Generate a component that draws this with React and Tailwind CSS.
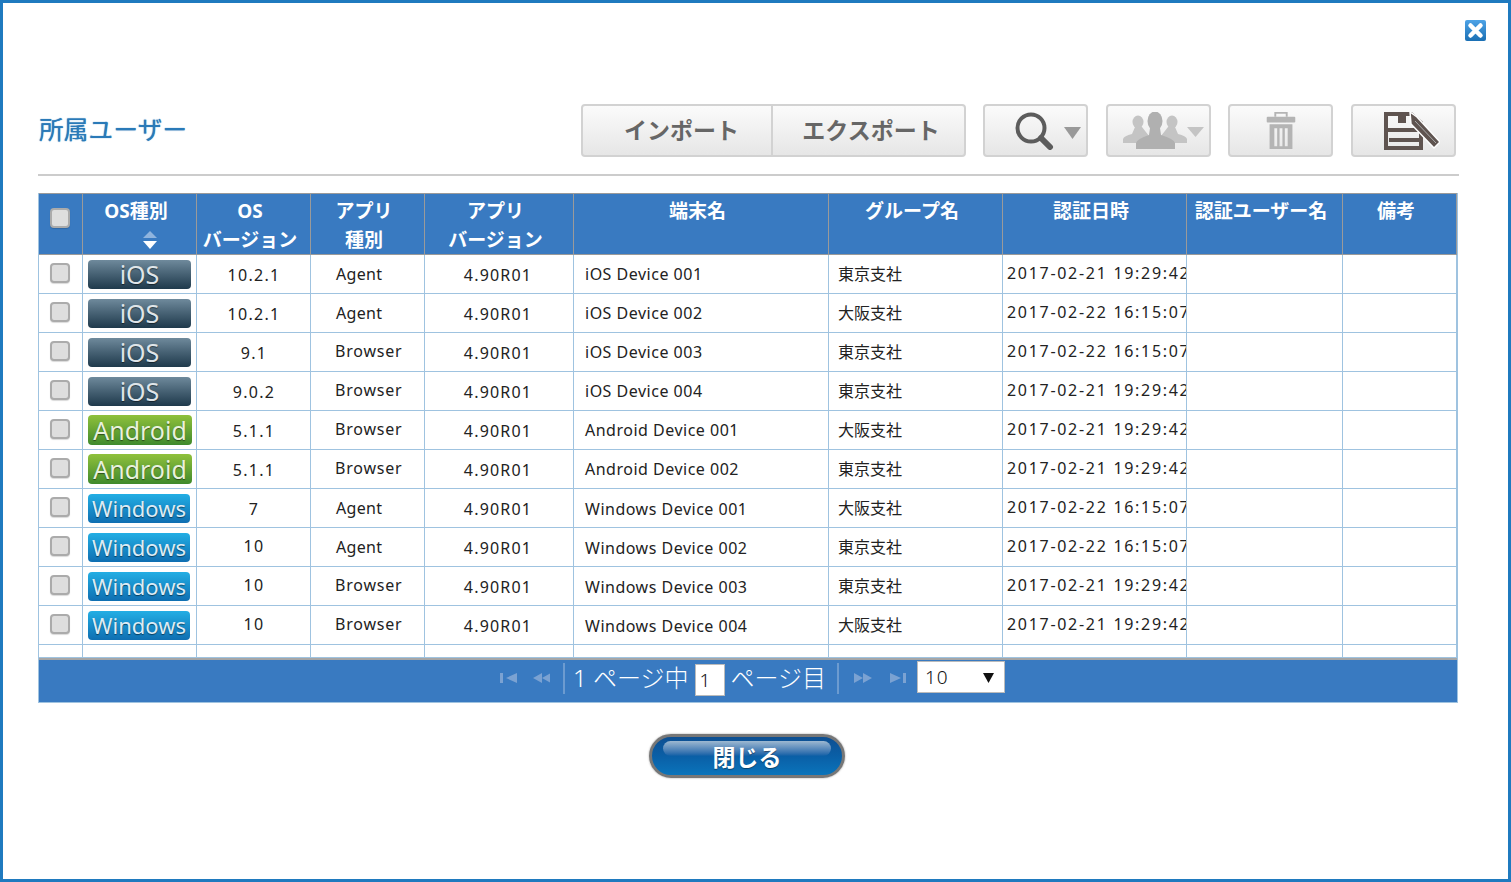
import React from "react";

const font = "[font-family:'Noto_Sans','Noto_Sans_CJK_JP',sans-serif]";
const cellBorder = "border border-[#9fc3e0]";

const rows = [
  ["ios", "10.2.1", "Agent", "iOS Device 001", "東京支社", "2017-02-21 19:29:42"],
  ["ios", "10.2.1", "Agent", "iOS Device 002", "大阪支社", "2017-02-22 16:15:07"],
  ["ios", "9.1", "Browser", "iOS Device 003", "東京支社", "2017-02-22 16:15:07"],
  ["ios", "9.0.2", "Browser", "iOS Device 004", "東京支社", "2017-02-21 19:29:42"],
  ["android", "5.1.1", "Browser", "Android Device 001", "大阪支社", "2017-02-21 19:29:42"],
  ["android", "5.1.1", "Browser", "Android Device 002", "東京支社", "2017-02-21 19:29:42"],
  ["windows", "7", "Agent", "Windows Device 001", "大阪支社", "2017-02-22 16:15:07"],
  ["windows", "10", "Agent", "Windows Device 002", "東京支社", "2017-02-22 16:15:07"],
  ["windows", "10", "Browser", "Windows Device 003", "東京支社", "2017-02-21 19:29:42"],
  ["windows", "10", "Browser", "Windows Device 004", "大阪支社", "2017-02-21 19:29:42"],
];

function Checkbox({ className = "" }) {
  return (
    <div className={`w-[20px] h-[20px] rounded-[4px] border-2 border-[#ababab] bg-[#dedede] shadow-[0_1px_1px_rgba(0,0,0,0.15)] ${className}`} />
  );
}

function OsBadge({ os }) {
  if (os === "ios")
    return (
      <div className="w-[103px] h-[29px] ml-[5px] rounded-[4px] bg-linear-to-b from-[#6f8a9c] to-[#1f3a4c] flex items-center justify-center text-[25px] leading-none text-[#dfe5e9] [font-family:'Noto_Sans',sans-serif] [text-shadow:0_1px_1px_rgba(0,0,0,0.5)]">
        iOS
      </div>
    );
  if (os === "android")
    return (
      <div className="w-[104px] h-[30px] ml-[5px] rounded-[4px] bg-linear-to-b from-[#8fc13c] to-[#3f8a2c] flex items-center justify-center text-[25px] leading-none text-[#e8f2dc] [font-family:'Noto_Sans',sans-serif] [text-shadow:0_1px_1px_rgba(0,0,0,0.5)]">
        Android
      </div>
    );
  return (
    <div className="w-[102px] h-[29px] ml-[5px] rounded-[4px] bg-linear-to-b from-[#23aee4] to-[#0f6fb2] flex items-center justify-center text-[22px] leading-none text-[#dcecf6] [font-family:'Noto_Sans',sans-serif] [text-shadow:0_1px_1px_rgba(0,0,0,0.5)]">
      Windows
    </div>
  );
}

function ToolButton({ children, className = "" }) {
  return (
    <div className={`w-[105px] h-[53px] rounded-[4px] border-2 border-[#d2d2d2] bg-linear-to-b from-[#fbfbfb] to-[#e6e6e6] flex items-center justify-center ${className}`}>
      {children}
    </div>
  );
}

function Th({ children, className = "" }) {
  return (
    <th className={`border border-[#9a9a9a] align-top pt-[3px] pr-[7px] pb-0 pl-0 text-center font-bold text-[19px] leading-[29px] text-white whitespace-nowrap overflow-hidden ${className}`}>
      <div className="h-[57px] flow-root">{children}</div>
    </th>
  );
}

function PagerTri({ dir, bar }) {
  return (
    <svg width="18" height="12" viewBox="0 0 18 12" className="fill-[#7ba2d2]">
      {dir === "left" ? (
        bar ? (
          <>
            <rect x="0" y="1" width="3" height="10" />
            <polygon points="17,1 17,11 6,6" />
          </>
        ) : (
          <>
            <polygon points="10,1 10,11 1,6" />
            <polygon points="19,1 19,11 10,6" />
          </>
        )
      ) : bar ? (
        <>
          <polygon points="1,1 1,11 12,6" />
          <rect x="14" y="1" width="3" height="10" />
        </>
      ) : (
        <>
          <polygon points="0,1 0,11 9,6" />
          <polygon points="9,1 9,11 18,6" />
        </>
      )}
    </svg>
  );
}

export default function App() {
  return (
    <div className={`w-[1511px] h-[882px] box-border border-[3px] border-[#1f7abf] bg-white text-[#222] overflow-hidden ${font}`}>
      <div className="flex justify-end pt-[17px] pr-[22px]">
        <svg width="21" height="21" viewBox="0 0 21 21">
          <defs>
            <linearGradient id="cb" x1="0" y1="0" x2="0" y2="1">
              <stop offset="0" stopColor="#4ea3e6" />
              <stop offset="1" stopColor="#1a6fb4" />
            </linearGradient>
          </defs>
          <rect width="21" height="21" rx="2" fill="url(#cb)" />
          <path d="M5.5 5.5 L15.5 15.5 M15.5 5.5 L5.5 15.5" stroke="#fff" strokeWidth="4.5" strokeLinecap="round" />
        </svg>
      </div>

      <div className="flex items-center pl-[36px] pr-[52px] mt-[63px] h-[53px]">
        <h1 className="text-[24.5px] leading-none font-normal tracking-[0.3px] text-[#2a7ab8] [text-shadow:0_0_1px_#2a7ab8] flex-1">所属ユーザー</h1>
        <div className="flex h-[53px] w-[385px] rounded-[4px] border-2 border-[#d2d2d2] bg-linear-to-b from-[#fbfbfb] to-[#e6e6e6] text-[23px] font-bold text-[#666]">
          <div className="w-[190px] pl-[9px] flex items-center justify-center border-r-2 border-[#d2d2d2]">インポート</div>
          <div className="flex-1 pl-[5px] flex items-center justify-center">エクスポート</div>
        </div>
        <div className="flex gap-[18px] ml-[17px]">
          <ToolButton>
            <svg width="66" height="38" viewBox="0 0 66 38" className="ml-[25px]">
              <circle cx="16" cy="16" r="13.5" fill="none" stroke="#5c5c5c" strokeWidth="4" />
              <path d="M26 26 L35 35" stroke="#5c5c5c" strokeWidth="6" strokeLinecap="round" />
              <polygon points="49,15 66,15 57.5,27" fill="#999" />
            </svg>
          </ToolButton>
          <ToolButton>
            <svg width="81" height="37" viewBox="0 0 81 37" className="ml-[10px]">
              <ellipse cx="15" cy="10" rx="5.5" ry="6.5" fill="#c4c4c4" />
              <path d="M0 31 V27 Q1 24 9 22 L12 15 H19 L26 24 V31 Z" fill="#c4c4c4" />
              <ellipse cx="49" cy="10" rx="5.5" ry="6.5" fill="#c4c4c4" />
              <path d="M64 31 V27 Q63 24 55 22 L52 15 H45 L38 24 V31 Z" fill="#c4c4c4" />
              <ellipse cx="32" cy="9" rx="7.5" ry="9.5" fill="#b0b0b0" />
              <path d="M13 37 V31 Q14 27 26 23 L27 16 H37 L38 23 Q51 27 52 31 V37 Z" fill="#b0b0b0" />
              <polygon points="64,15 81,15 72.5,25" fill="#c4c4c4" />
            </svg>
          </ToolButton>
          <ToolButton className="-ml-[1px]">
            <svg width="32" height="40" viewBox="0 0 32 42" fill="#b4b4b4">
              <rect x="1" y="6" width="30" height="6" rx="1" />
              <path d="M10 6 V2 H22 V6" fill="none" stroke="#b4b4b4" strokeWidth="2" />
              <path d="M4 14 H28 V40 H4 Z M9 18 V37 H12 V18 Z M14.5 18 V37 H17.5 V18 Z M20 18 V37 H23 V18 Z" fillRule="evenodd" />
            </svg>
          </ToolButton>
          <ToolButton>
            <svg width="56" height="38" viewBox="0 0 56 38" className="ml-[17px]">
              <path d="M2 2 H27 L37 11 V36 H2 Z" fill="none" stroke="#5f5450" strokeWidth="4" />
              <rect x="14" y="2" width="8" height="9" fill="#5f5450" />
              <rect x="1" y="16" width="34" height="4" fill="#5f5450" />
              <rect x="5" y="26" width="30" height="4" fill="#5f5450" />
              <path d="M26 0 L33 5 L56 30 L50 36 L27 12 Z" fill="#5f5450" stroke="#fff" strokeWidth="1.5" />
              <path d="M31 9 L52 31" stroke="#aaa" strokeWidth="1" />
            </svg>
          </ToolButton>
        </div>
      </div>

      <div className="mt-[17px] ml-[35px] w-[1421px] h-[2px] bg-[#cccccc]" />

      <div className="mt-[17px] ml-[35px] w-[1420px] h-[510px] bg-white border border-[#9fc3e0] border-t-0 overflow-hidden flex flex-col">
        <div className="h-[465px] overflow-hidden">
          <table className="table-fixed border-collapse w-[1418px] -ml-[1px]">
            <colgroup>
              <col className="w-[44px]" />
              <col className="w-[114px]" />
              <col className="w-[114px]" />
              <col className="w-[114px]" />
              <col className="w-[149px]" />
              <col className="w-[255px]" />
              <col className="w-[174px]" />
              <col className="w-[184px]" />
              <col className="w-[156px]" />
              <col className="w-[114px]" />
            </colgroup>
            <thead>
              <tr className="h-[60px] bg-[#397ac1]">
                <Th>
                  <Checkbox className="ml-[11px] mt-[11px]" />
                </Th>
                <Th>
                  <div>OS種別</div>
                  <div className="flex justify-center pl-[27px]">
                    <svg width="14" height="18" viewBox="0 0 14 18" className="mt-[5px]">
                      <polygon points="7,0 14,7 0,7" fill="#8fb4de" />
                      <polygon points="0,10 14,10 7,18" fill="#fff" />
                    </svg>
                  </div>
                </Th>
                <Th>OS<br />バージョン</Th>
                <Th>アプリ<br />種別</Th>
                <Th>アプリ<br />バージョン</Th>
                <Th>端末名</Th>
                <Th>グループ名</Th>
                <Th>認証日時</Th>
                <Th>認証ユーザー名</Th>
                <Th>備考</Th>
              </tr>
            </thead>
            <tbody className="text-[16px] text-[#222]">
              {rows.map((r, i) => {
                const ten = r[1] === "10";
                const browser = r[2] === "Browser";
                const win = r[0] === "windows";
                return (
                  <tr key={i} className="h-[39px]">
                    <td className={`${cellBorder} p-0 pl-[11px] pb-[3px]`}><Checkbox /></td>
                    <td className={`${cellBorder} p-0`}><OsBadge os={r[0]} /></td>
                    <td className={`${cellBorder} p-0 pl-[1px] text-center tracking-[1.3px] ${ten ? "pb-[3px]" : "pt-[2px]"}`}>{r[1]}</td>
                    <td className={`${cellBorder} p-0 ${browser ? "pl-[24px] tracking-[0.8px] pb-[3px]" : "pl-[25px] tracking-[0.3px]"}`}>{r[2]}</td>
                    <td className={`${cellBorder} p-0 pr-[2px] text-center tracking-[1.2px] pt-[1px]`}>4.90R01</td>
                    <td className={`${cellBorder} p-0 pl-[11px] tracking-[0.5px] ${win ? "pt-[2px]" : ""}`}>{r[3]}</td>
                    <td className={`${cellBorder} p-0 pl-[9px]`}>{r[4]}</td>
                    <td className={`${cellBorder} p-0 pl-[4px] pb-[3px] whitespace-nowrap overflow-hidden tracking-[1.7px]`}>{r[5]}</td>
                    <td className={cellBorder} />
                    <td className={cellBorder} />
                  </tr>
                );
              })}
              <tr className="h-[13px]">
                {Array.from({ length: 10 }).map((_, i) => (
                  <td key={i} className={`${cellBorder} p-0`} />
                ))}
              </tr>
            </tbody>
          </table>
        </div>
        <div className="flex-1 border-t-2 border-[#a6a6a6] bg-[#397ac1] flex items-center pl-[461px] pb-[6px] text-white text-[24px] font-light">
          <PagerTri dir="left" bar />
          <div className="ml-[14px]"><PagerTri dir="left" /></div>
          <div className="w-[2px] h-[31px] bg-[#6c9bd0] ml-[13px]" />
          <span className="ml-[8px] whitespace-nowrap">1 ページ中</span>
          <div className="ml-[7px] mt-[4px] w-[30px] h-[32px] bg-white border border-[#bbb] text-[#111] text-[19px] leading-[30px] pl-[3px]">1</div>
          <span className="ml-[5px] whitespace-nowrap">ページ目</span>
          <div className="w-[2px] h-[31px] bg-[#6c9bd0] ml-[11px]" />
          <div className="ml-[15px]"><PagerTri dir="right" /></div>
          <div className="ml-[17px]"><PagerTri dir="right" bar /></div>
          <div className="ml-[10px] -mt-[2px] w-[88px] h-[32px] bg-white border border-[#bbb] text-[#111] text-[19px] flex items-center justify-between pl-[7px] pr-[10px]">
            <span className="tracking-[1px]">10</span>
            <svg width="11" height="11" viewBox="0 0 11 11"><polygon points="0,1 11,1 5.5,11" fill="#111" /></svg>
          </div>
        </div>
      </div>

      <div className="flex justify-center mt-[31px] pr-[17px]">
        <div className="relative w-[196px] h-[44px] rounded-full border-[3px] border-[#777] bg-linear-to-b from-[#0d4f92] via-[#0a5fa6] to-[#0a74bb] flex items-center justify-center shadow-[0_0_2px_rgba(0,0,0,0.4)]">
          <div className="absolute top-[4px] left-[11px] right-[11px] h-[15px] rounded-full bg-linear-to-b from-[#9db8d0] to-[#0a5fa6]" />
          <span className="relative text-white text-[23px] font-bold leading-none [text-shadow:0_1px_1px_rgba(0,0,0,0.4)] mt-[2px]">閉じる</span>
        </div>
      </div>
    </div>
  );
}
